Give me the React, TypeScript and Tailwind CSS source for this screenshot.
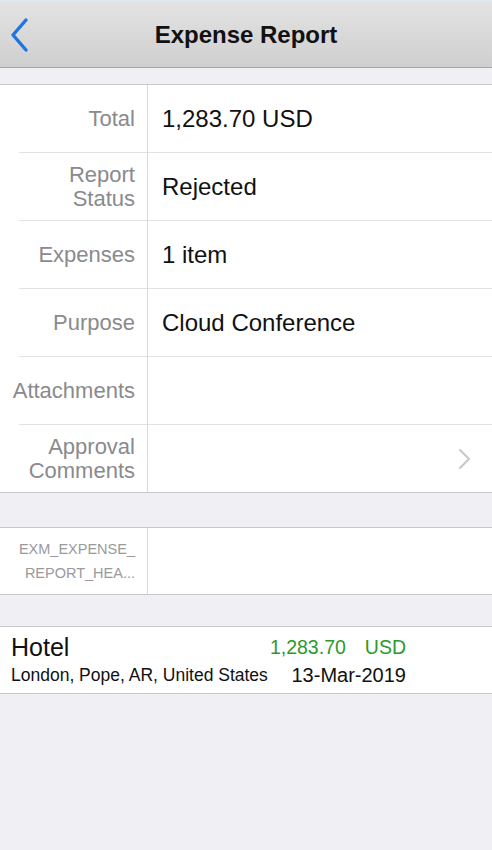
import React from "react";

type Field = {
  label: string[];
  value?: string;
  chevron?: boolean;
};

const fields: Field[] = [
  { label: ["Total"], value: "1,283.70 USD" },
  { label: ["Report", "Status"], value: "Rejected" },
  { label: ["Expenses"], value: "1 item" },
  { label: ["Purpose"], value: "Cloud Conference" },
  { label: ["Attachments"] },
  { label: ["Approval", "Comments"], chevron: true },
];

const Separator = () => (
  <div className="flex h-px">
    <div className="w-[19px] bg-white" />
    <div className="w-[128px] bg-[#e1e1e4]" />
    <div className="w-px bg-[#dadade]" />
    <div className="flex-1 bg-[#e1e1e4]" />
  </div>
);

const FieldRow: React.FC<{ field: Field }> = ({ field }) => (
  <div className="flex h-[67px]">
    <div className="flex w-[148px] shrink-0 flex-col items-end justify-center border-r border-[#dadade] pr-[12px] text-right text-[22px] leading-[24px] text-[#8a8a8e]">
      {field.label.map((l) => (
        <span key={l}>{l}</span>
      ))}
    </div>
    <div className="flex flex-1 items-center justify-between pl-[14px] pr-[20px] text-[24px] text-[#111]">
      <span>{field.value}</span>
      {field.chevron && (
        <svg width="14" height="22" viewBox="0 0 14 22" fill="none">
          <path d="M2 2l9 9-9 9" stroke="#c7c7cc" strokeWidth="2" strokeLinecap="round" strokeLinejoin="round" />
        </svg>
      )}
    </div>
  </div>
);

export default function App() {
  return (
    <div className="flex min-h-[850px] w-full flex-col bg-[#efeff4] font-['Liberation_Sans',Arial,sans-serif]">
      {/* nav bar */}
      <div className="border-t-2 border-[#dfe7ef]">
        <div className="relative flex h-[66px] items-center justify-center border-b border-[#a6a6a8] bg-gradient-to-b from-[#e3e3e3] to-[#cfcfcf]">
          <svg className="absolute left-[9px] top-[15px]" width="20" height="36" viewBox="0 0 20 36" fill="none">
            <path d="M17 3L4 18l13 15" stroke="#1e74e0" strokeWidth="3.4" strokeLinecap="round" strokeLinejoin="round" />
          </svg>
          <span className="text-[24px] font-bold text-[#111]">Expense Report</span>
        </div>
      </div>

      {/* detail fields */}
      <div className="mt-[16px] border-y border-[#c8c7cc] bg-white">
        {fields.map((f, i) => (
          <React.Fragment key={f.label.join(" ")}>
            {i > 0 && <Separator />}
            <FieldRow field={f} />
          </React.Fragment>
        ))}
      </div>

      {/* descriptive flexfield */}
      <div className="mt-[34px] flex h-[68px] border-y border-[#c8c7cc] bg-white">
        <div className="flex w-[148px] shrink-0 flex-col items-end justify-center border-r border-[#dadade] pr-[12px] text-right text-[14.5px] leading-[24px] text-[#9a9a9e]">
          <span>EXM_EXPENSE_</span>
          <span>REPORT_HEA...</span>
        </div>
        <div className="flex-1" />
      </div>

      {/* expense lines */}
      <div className="mt-[31px] flex h-[68px] items-stretch border-y border-[#c8c7cc] bg-white pl-[11px] pr-[86px]">
        <div className="flex flex-1 flex-col justify-center">
          <span className="text-[25px] leading-[30px] text-[#111]">Hotel</span>
          <span className="text-[17.5px] leading-[26px] text-[#111]">London, Pope, AR, United States</span>
        </div>
        <div className="flex flex-col items-end justify-center">
          <div className="flex gap-[19px] text-[19.5px] leading-[30px] text-[#2b9a2b]">
            <span>1,283.70</span>
            <span>USD</span>
          </div>
          <span className="text-[20px] leading-[26px] text-[#111]">13-Mar-2019</span>
        </div>
      </div>
    </div>
  );
}
